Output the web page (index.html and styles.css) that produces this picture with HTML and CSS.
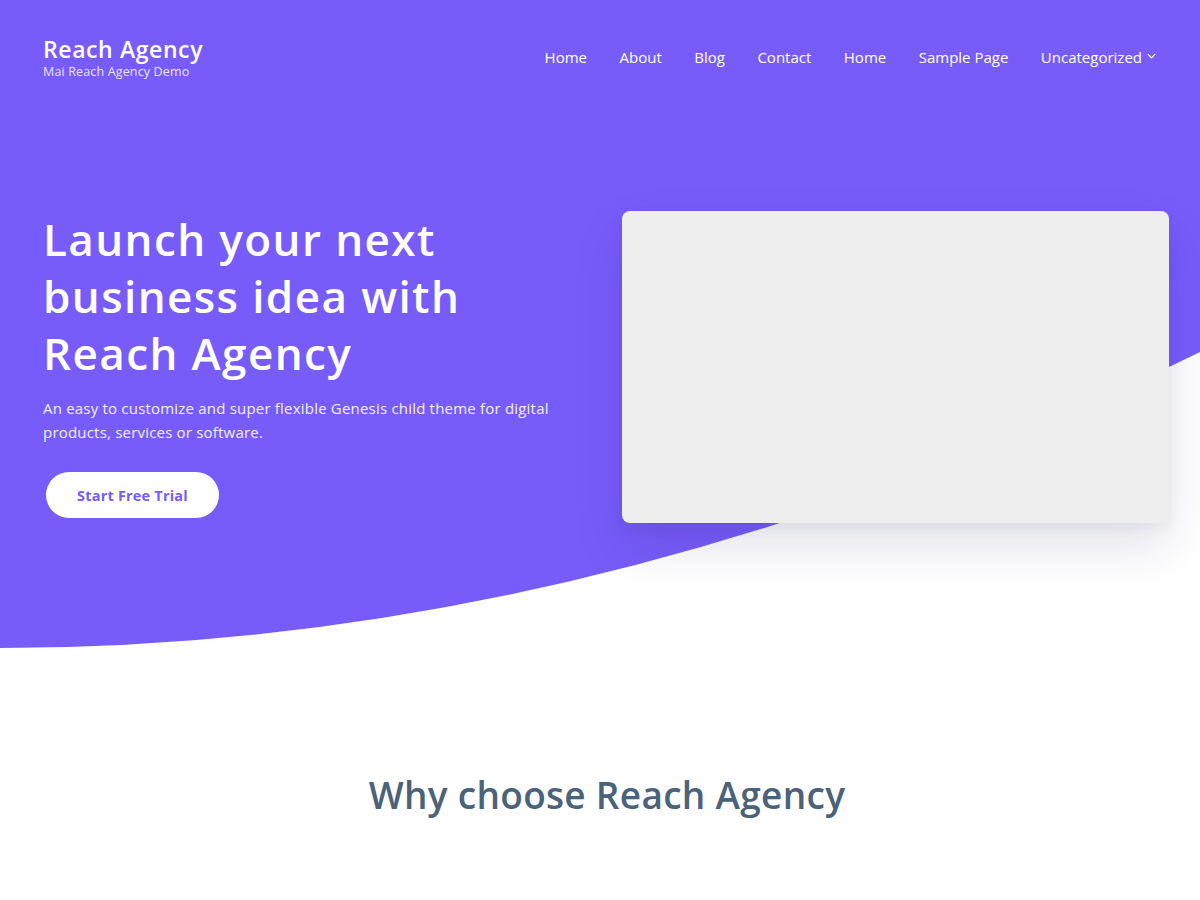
FILE: index.html
```html
<!DOCTYPE html>
<html lang="en">
<head>
<meta charset="utf-8">
<title>Reach Agency</title>
<link rel="stylesheet" href="styles.css">
</head>
<body>
<div class="hero">
  <svg class="hero-bg" viewBox="0 0 1200 648" preserveAspectRatio="none" aria-hidden="true">
    <path d="M0 0H1200V352Q600 648 0 648Z" fill="#775cfa"/>
  </svg>
  <header class="site-header">
    <div class="brand">
      <div class="site-title">Reach Agency</div>
      <div class="site-desc">Mai Reach Agency Demo</div>
    </div>
    <nav class="nav">
      <a href="#">Home</a>
      <a href="#">About</a>
      <a href="#">Blog</a>
      <a href="#">Contact</a>
      <a href="#">Home</a>
      <a href="#">Sample Page</a>
      <a href="#" class="has-sub">Uncategorized <svg class="caret" viewBox="0 0 10 6" width="9" height="6"><path d="M1 1l4 4 4-4" fill="none" stroke="#fff" stroke-width="1.3"/></svg></a>
    </nav>
  </header>
  <section class="hero-body">
    <div class="hero-text">
      <h1>Launch your next business idea with Reach Agency</h1>
      <p>An easy to customize and super flexible Genesis child theme for digital products, services or software.</p>
      <a href="#" class="btn">Start Free Trial</a>
    </div>
    <div class="hero-card"></div>
  </section>
</div>
<section class="why">
  <h2>Why choose Reach Agency</h2>
</section>
</body>
</html>
```
FILE: styles.css
```css
* { box-sizing: border-box; }
html, body { margin: 0; padding: 0; }
body {
  font-family: "Open Sans", "Noto Sans", sans-serif;
  background: #fff;
  color: #4a627a;
  width: 1200px;
  overflow: hidden;
}
a { text-decoration: none; color: inherit; }

.hero {
  position: relative;
  height: 648px;
}
.hero-bg {
  position: absolute;
  top: 0;
  left: 0;
  width: 1200px;
  height: 648px;
  z-index: 0;
}
.site-header, .hero-body { position: relative; z-index: 1; }

.site-header {
  display: flex;
  justify-content: space-between;
  align-items: center;
  padding: 36px 44px 0 43px;
}
.site-title {
  font-size: 23px;
  font-weight: 600;
  line-height: 26px;
  color: #fff;
  letter-spacing: 0.6px;
}
.site-desc {
  font-size: 12.5px;
  line-height: 16px;
  color: #e9e4ff;
  margin-top: 2px;
  letter-spacing: 0.15px;
}
.nav {
  display: flex;
  gap: 32.5px;
  font-size: 15px;
  color: #fff;
  margin-top: -3px;
}
.nav a { display: flex; align-items: center; gap: 5px; }
.caret { margin-top: -2px; }

.hero-body {
  display: flex;
  align-items: flex-start;
  justify-content: space-between;
  padding: 0 31px 0 43px;
  margin-top: 131px;
}
.hero-text { width: 540px; }
.hero-text h1 {
  margin: 0;
  width: 480px;
  font-size: 44px;
  line-height: 57px;
  font-weight: 600;
  color: #fff;
  letter-spacing: 1.4px;
}
.hero-text p {
  margin: 14px 0 0;
  font-size: 15px;
  line-height: 24px;
  color: #f1eeff;
  width: 530px;
  letter-spacing: 0.2px;
}
.btn {
  display: inline-flex;
  align-items: center;
  justify-content: center;
  margin: 28px 0 0 3px;
  width: 173px;
  height: 46px;
  border-radius: 23px;
  background: #fff;
  color: #775cfa;
  font-weight: 700;
  font-size: 14.5px;
  letter-spacing: 0.2px;
}
.hero-card {
  width: 547px;
  height: 312px;
  background: #eeeeee;
  border-radius: 8px;
  box-shadow: 0 24px 50px rgba(40, 30, 90, 0.13), 0 4px 14px rgba(40, 30, 90, 0.06);
}

.why {
  padding: 124px 0 0 14px;
  text-align: center;
}
.why h2 {
  margin: 0;
  font-size: 37px;
  line-height: 46px;
  font-weight: 600;
  color: #4a627a;
  letter-spacing: 0.3px;
}
```
